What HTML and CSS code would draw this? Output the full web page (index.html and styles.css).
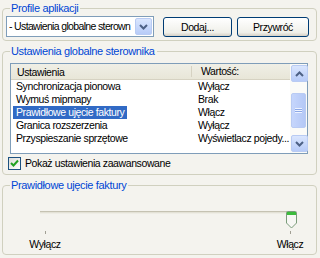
FILE: index.html
```html
<!DOCTYPE html>
<html lang="pl">
<head>
    <meta charset="UTF-8">
    <title>Ustawienia sterownika</title>
    <link rel="stylesheet" href="styles.css">
</head>
<body>
    <div class="group group-profile">
        <span class="group-title">Profile aplikacji</span>
        <div class="profile-row">
            <div class="combo">
                <span class="combo-text">- Ustawienia globalne sterown</span>
                <span class="combo-btn">
                    <svg width="9" height="6" viewBox="0 0 9 6"><path d="M1 1 L4.5 4.5 L8 1" fill="none" stroke="#4d6185" stroke-width="2"/></svg>
                </span>
            </div>
            <button class="btn btn-add">Dodaj...</button>
            <button class="btn btn-restore">Przywróć</button>
        </div>
    </div>

    <div class="group group-settings">
        <span class="group-title">Ustawienia globalne sterownika</span>
        <div class="listview">
            <div class="list-main">
                <div class="list-header">
                    <div class="col col-name">Ustawienia</div>
                    <div class="col col-value">Wartość:</div>
                </div>
                <div class="list-row">
                    <div class="cell-name"><span>Synchronizacja pionowa</span></div>
                    <div class="cell-value">Wyłącz</div>
                </div>
                <div class="list-row">
                    <div class="cell-name"><span>Wymuś mipmapy</span></div>
                    <div class="cell-value">Brak</div>
                </div>
                <div class="list-row selected">
                    <div class="cell-name"><span>Prawidłowe ujęcie faktury</span></div>
                    <div class="cell-value">Włącz</div>
                </div>
                <div class="list-row">
                    <div class="cell-name"><span>Granica rozszerzenia</span></div>
                    <div class="cell-value">Wyłącz</div>
                </div>
                <div class="list-row">
                    <div class="cell-name"><span>Przyspieszanie sprzętowe</span></div>
                    <div class="cell-value">Wyświetlacz pojedy...</div>
                </div>
            </div>
            <div class="scrollbar">
                <span class="scroll-btn">
                    <svg width="9" height="6" viewBox="0 0 9 6"><path d="M1 5 L4.5 1.5 L8 5" fill="none" stroke="#4d6185" stroke-width="2"/></svg>
                </span>
                <span class="scroll-track">
                    <span class="scroll-thumb">
                        <span class="grip"></span>
                    </span>
                </span>
                <span class="scroll-btn">
                    <svg width="9" height="6" viewBox="0 0 9 6"><path d="M1 1 L4.5 4.5 L8 1" fill="none" stroke="#4d6185" stroke-width="2"/></svg>
                </span>
            </div>
        </div>
        <label class="check-row">
            <span class="checkbox">
                <svg width="9" height="9" viewBox="0 0 9 9"><path d="M1 4 L3.5 6.5 L8 1.5" fill="none" stroke="#21a121" stroke-width="2"/></svg>
            </span>
            Pokaż ustawienia zaawansowane
        </label>
    </div>

    <div class="group group-slider">
        <span class="group-title">Prawidłowe ujęcie faktury</span>
        <div class="slider">
            <div class="track"></div>
            <div class="thumb">
                <svg width="11" height="18" viewBox="0 0 11 18">
                    <path d="M1.5 0.5 H9.5 Q10.5 0.5 10.5 1.5 V12 L5.5 17 L0.5 12 V1.5 Q0.5 0.5 1.5 0.5 Z" fill="#f7f7f4" stroke="#7a9b7a"/>
                    <rect x="1" y="1" width="9" height="3" fill="#3cbc3c"/>
                </svg>
            </div>
        </div>
        <div class="ticks">
            <span class="tick"></span>
            <span class="tick"></span>
        </div>
        <div class="slider-labels">
            <span>Wyłącz</span>
            <span>Włącz</span>
        </div>
    </div>
</body>
</html>
```

FILE: styles.css
```css
body {
    margin: 0;
    padding: 0 3px 0 2px;
    width: 315px;
    height: 258px;
    background-color: #f4f3ee;
    font-family: 'Liberation Sans', Arial, sans-serif;
    font-size: 10.5px;
    letter-spacing: -0.4px;
    line-height: 13px;
    color: #000;
    overflow: hidden;
}
.group {
    border: 1px solid #d0d0bf;
    border-radius: 4px;
    margin-top: 10px;
}
.group-profile {
    margin-top: 8px;
    padding: 0 0 3px 0;
}
.group-title {
    display: block;
    width: max-content;
    height: 13px;
    margin: -7px 0 0 7px;
    padding: 0 2px 0 1px;
    font-size: 11px;
    letter-spacing: -0.35px;
    line-height: 13px;
    color: #0046d5;
    background-color: #f4f3ee;
}
.profile-row {
    display: flex;
    align-items: center;
    margin: 1px 0 0 3px;
}
.combo {
    display: flex;
    align-items: center;
    width: 146px;
    height: 19px;
    border: 1px solid #7f9db9;
    background-color: #fff;
}
.combo-text {
    flex: 1;
    padding-left: 2px;
    letter-spacing: -0.65px;
    white-space: nowrap;
    overflow: hidden;
}
.combo-btn, .scroll-btn {
    display: flex;
    align-items: center;
    justify-content: center;
    width: 15px;
    height: 15px;
    margin: 1px;
    border: 1px solid #b9cbf3;
    border-radius: 2px;
    background: linear-gradient(#dae6fe, #b7cbf8);
}
.btn {
    height: 20px;
    margin-left: 9px;
    border: 1px solid #003c74;
    border-radius: 3px;
    background: linear-gradient(#ffffff, #f0f0ea 80%, #d6d0c5);
    font-family: 'Liberation Sans', Arial, sans-serif;
    font-size: 10.5px;
    letter-spacing: -0.4px;
    color: #000;
    padding: 0;
}
.btn-add {
    width: 69px;
}
.btn-restore {
    width: 72px;
    margin-left: 5px;
}
.group-settings {
    padding: 0 0 4px 0;
}
.listview {
    display: flex;
    height: 89px;
    margin: 5px 8px 0 7px;
    border: 1px solid #7f9db9;
    background-color: #fff;
}
.list-main {
    flex: 1;
}
.list-header {
    display: flex;
    height: 16px;
    background: linear-gradient(#f0efe6, #e8e6d8);
    border-bottom: 1px solid #d6d2c2;
    box-sizing: border-box;
}
.col-name {
    width: 174px;
    padding-left: 6px;
    border-right: 1px solid #d6d2c2;
    margin: 2px 0;
    line-height: 12px;
}
.col-value {
    padding-left: 9px;
    line-height: 15px;
}
.list-row {
    display: flex;
    height: 13px;
    line-height: 13px;
}
.cell-name {
    width: 180px;
    padding-left: 2px;
}
.cell-name span {
    display: inline-block;
    padding: 0 3px;
}
.selected .cell-name span {
    background-color: #316ac5;
    color: #fff;
}
.cell-value {
    padding-left: 5px;
    white-space: nowrap;
}
.scrollbar {
    display: flex;
    flex-direction: column;
    width: 17px;
    background-color: #fbfbf8;
}
.scroll-track {
    flex: 1;
    display: flex;
    flex-direction: column;
    justify-content: center;
    padding-top: 4px;
}
.scroll-thumb {
    display: flex;
    align-items: center;
    justify-content: center;
    height: 33px;
    margin: 0 1px;
    border: 1px solid #b9cbf3;
    border-radius: 2px;
    background: linear-gradient(90deg, #c6d6fc, #b4c8f6);
}
.grip {
    width: 7px;
    height: 5px;
    background: repeating-linear-gradient(#eef3ff 0 1px, #8ca8e6 1px 2px);
}
.check-row {
    display: flex;
    align-items: center;
    margin: 3px 0 0 5px;
    height: 13px;
}
.checkbox {
    display: flex;
    align-items: center;
    justify-content: center;
    width: 11px;
    height: 11px;
    margin-right: 4px;
    border: 1px solid #1c5180;
    background: linear-gradient(135deg, #dcdcd7, #ffffff);
}
.group-slider {
    height: 68px;
}
.slider {
    position: relative;
    width: 252px;
    height: 18px;
    margin: 19px 0 0 37px;
}
.track {
    height: 1px;
    margin-top: 7px;
    border-top: 1px solid #c5c2b2;
    border-bottom: 1px solid #eeede5;
    background-color: #e3e1d6;
}
.thumb {
    position: absolute;
    left: 246px;
    top: 0;
    line-height: 0;
}
.ticks {
    display: flex;
    justify-content: space-between;
    width: 246px;
    margin: 2px 0 0 42px;
}
.tick {
    width: 1px;
    height: 3px;
    background-color: #a19f94;
}
.slider-labels {
    display: flex;
    justify-content: space-between;
    width: 285px;
    margin: 4px 0 0 22px;
}
.slider-labels span {
    width: 40px;
    text-align: center;
}
```
